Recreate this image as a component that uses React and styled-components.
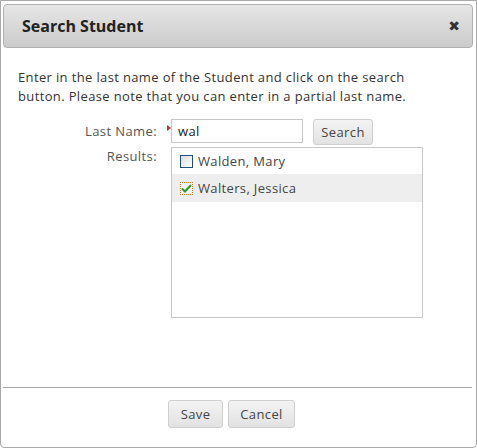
import React from "react";
import styled, { createGlobalStyle } from "styled-components";

const Global = createGlobalStyle`
  html, body { margin: 0; padding: 0; background: #fff; }
  body { font-family: "Open Sans", "DejaVu Sans", sans-serif; }
  * { box-sizing: border-box; }
`;

const Dialog = styled.div`
  width: 477px;
  height: 448px;
  border: 1px solid #a9a9a9;
  border-radius: 0 0 4px 4px;
  padding: 3px 3px 0 2px;
  display: flex;
  flex-direction: column;
  background: #fff;
`;

const Header = styled.div`
  height: 44px;
  border: 1px solid #b0b0b0;
  border-radius: 4px;
  background: linear-gradient(#e6e6e6, #cbcbcb);
  display: flex;
  align-items: center;
  justify-content: space-between;
  padding: 0 12px 0 18px;
`;

const Title = styled.h1`
  margin: 0;
  font-family: "Open Sans", sans-serif;
  font-weight: 700;
  font-size: 16px;
  color: #222;
`;

const Close = styled.span`
  font-size: 14px;
  font-weight: 700;
  color: #333;
  line-height: 1;
`;

const Body = styled.div`
  flex: 1;
  padding: 20px 0 0 15px;
  color: #333;
`;

const Intro = styled.p`
  margin: 0;
  font-size: 13px;
  line-height: 19px;
  color: #333;
  letter-spacing: 0.36px;
`;

const Form = styled.div`
  margin-top: 13px;
  display: grid;
  grid-template-columns: 139px 14px auto;
  row-gap: 2px;
  align-items: start;
`;

const Label = styled.div`
  text-align: right;
  font-size: 13px;
  letter-spacing: 0.4px;
  color: #555;
  line-height: 18px;
  padding-top: ${(p) => p.$top || 0}px;
`;

const Marker = styled.span`
  width: 0;
  height: 0;
  margin: 6px 0 0 10px;
  border-top: 3px solid transparent;
  border-bottom: 3px solid transparent;
  border-left: 4px solid #c9302c;
`;

const SearchRow = styled.div`
  display: flex;
  align-items: flex-start;
  gap: 10px;
`;

const Input = styled.div`
  width: 132px;
  height: 24px;
  border: 1px solid #c8c8c8;
  font-size: 13px;
  letter-spacing: 0.4px;
  color: #222;
  padding: 2px 6px;
  line-height: 18px;
`;

const Button = styled.button`
  font-family: "Open Sans", sans-serif;
  font-size: 13px;
  letter-spacing: 0.4px;
  color: #444;
  width: ${(p) => p.$w}px;
  height: ${(p) => p.$h || 28}px;
  padding: 0;
  border: 1px solid #cfcfcf;
  border-radius: 3px;
  background: linear-gradient(#f3f3f3, #e2e2e2);
  cursor: pointer;
`;

const List = styled.div`
  grid-column: 3;
  width: 252px;
  height: 171px;
  border: 1px solid #c8c8c8;
`;

const Row = styled.div`
  height: ${(p) => (p.$selected ? 28 : 26)}px;
  display: flex;
  align-items: center;
  gap: 5px;
  padding-left: 8px;
  background: ${(p) => (p.$selected ? "#eeeeee" : "transparent")};
  font-size: 13px;
  letter-spacing: 0.35px;
  color: #444;
`;

const Box = styled.span`
  width: 13px;
  height: 13px;
  display: inline-flex;
  align-items: center;
  justify-content: center;
  border: 1px ${(p) => (p.$checked ? "dotted #d07a2a" : "solid #1f4f7f")};
  background: ${(p) =>
    p.$checked ? "#f4f4f4" : "linear-gradient(135deg, #dcdcdc, #ffffff)"};
`;

const Footer = styled.div`
  border-top: 1px solid #a9a9a9;
  height: 60px;
  flex-shrink: 0;
  display: flex;
  align-items: flex-start;
  gap: 5px;
  padding: 12px 0 0 165px;
  margin-right: 1px;
`;

export default function App() {
  return (
    <>
      <Global />
      <Dialog>
        <Header>
          <Title>Search Student</Title>
          <Close>✖</Close>
        </Header>
        <Body>
          <Intro>
            Enter in the last name of the Student and click on the search
            <br />
            button. Please note that you can enter in a partial last name.
          </Intro>
          <Form>
            <Label $top={3}>Last Name:</Label>
            <Marker />
            <SearchRow>
              <Input>wal</Input>
              <Button $w={60} $h={26}>Search</Button>
            </SearchRow>
            <Label $top={0}>Results:</Label>
            <span />
            <List>
              <Row>
                <Box />
                Walden, Mary
              </Row>
              <Row $selected>
                <Box $checked>
                  <svg width="11" height="9" viewBox="0 0 11 9">
                    <path d="M1 4.5 L4 7.5 L10 1" fill="none" stroke="#2a9a2a" strokeWidth="2" />
                  </svg>
                </Box>
                Walters, Jessica
              </Row>
            </List>
          </Form>
        </Body>
        <Footer>
          <Button $w={55}>Save</Button>
          <Button $w={67}>Cancel</Button>
        </Footer>
      </Dialog>
    </>
  );
}
